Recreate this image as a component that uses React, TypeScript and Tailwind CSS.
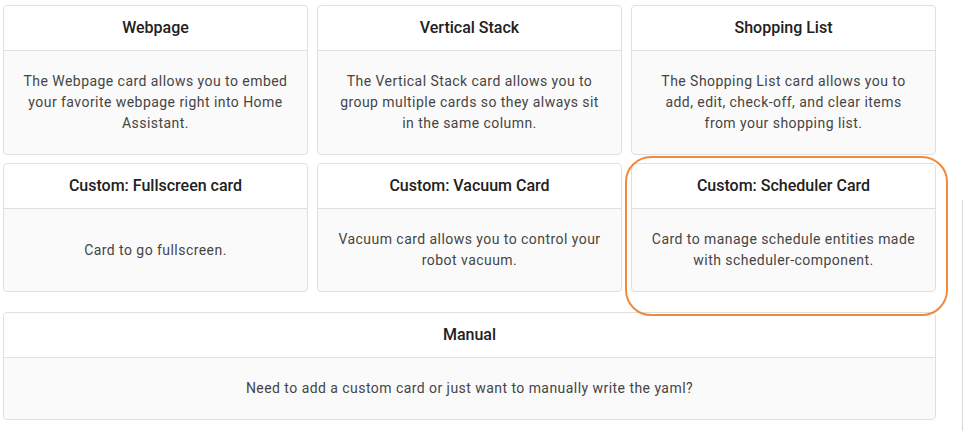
const cards = [
  {
    title: "Webpage",
    text: "The Webpage card allows you to embed your favorite webpage right into Home Assistant.",
  },
  {
    title: "Vertical Stack",
    text: "The Vertical Stack card allows you to group multiple cards so they always sit in the same column.",
  },
  {
    title: "Shopping List",
    text: "The Shopping List card allows you to add, edit, check-off, and clear items from your shopping list.",
  },
  { title: "Custom: Fullscreen card", text: "Card to go fullscreen." },
  {
    title: "Custom: Vacuum Card",
    text: "Vacuum card allows you to control your robot vacuum.",
  },
  {
    title: "Custom: Scheduler Card",
    text: "Card to manage schedule entities made with scheduler-component.",
    highlight: true,
  },
];

const Card = ({ title, text, highlight }: { title: string; text: string; highlight?: boolean }) => (
  <div className="relative flex flex-col rounded-[4px] border border-[#e0e0e0] bg-[#fafafa]">
    {highlight && (
      <div className="pointer-events-none absolute z-10 -left-[7px] -right-[13px] -top-[8px] -bottom-[25px] rounded-[26px] border-2 border-[#f08a3c]" />
    )}
    <div className="flex h-[45px] items-center justify-center rounded-t-[4px] border-b border-[#e0e0e0] bg-white text-[16px] font-medium text-[#212121]">
      {title}
    </div>
    <div className="flex flex-1 items-center justify-center px-[18px] py-[20px] text-center text-[14px] leading-[21px] tracking-[0.45px] text-[#454545]">
      {text}
    </div>
  </div>
);

export default function App() {
  return (
    <div
      className="relative h-[431px] w-[964px] overflow-hidden bg-white"
      style={{ fontFamily: "Roboto, 'Liberation Sans', sans-serif" }}
    >
      <div className="w-[936px] pl-[3px] pt-[5px]">
        <div className="grid grid-cols-3 gap-x-[9px] gap-y-[8px]">
          {cards.map((c) => (
            <Card key={c.title} {...c} />
          ))}
        </div>
        <div className="mt-[20px]">
          <Card title="Manual" text="Need to add a custom card or just want to manually write the yaml?" />
        </div>
      </div>
      <div className="absolute bottom-0 right-[1px] top-[200px] w-px bg-[#d6d6d6]" />
    </div>
  );
}
